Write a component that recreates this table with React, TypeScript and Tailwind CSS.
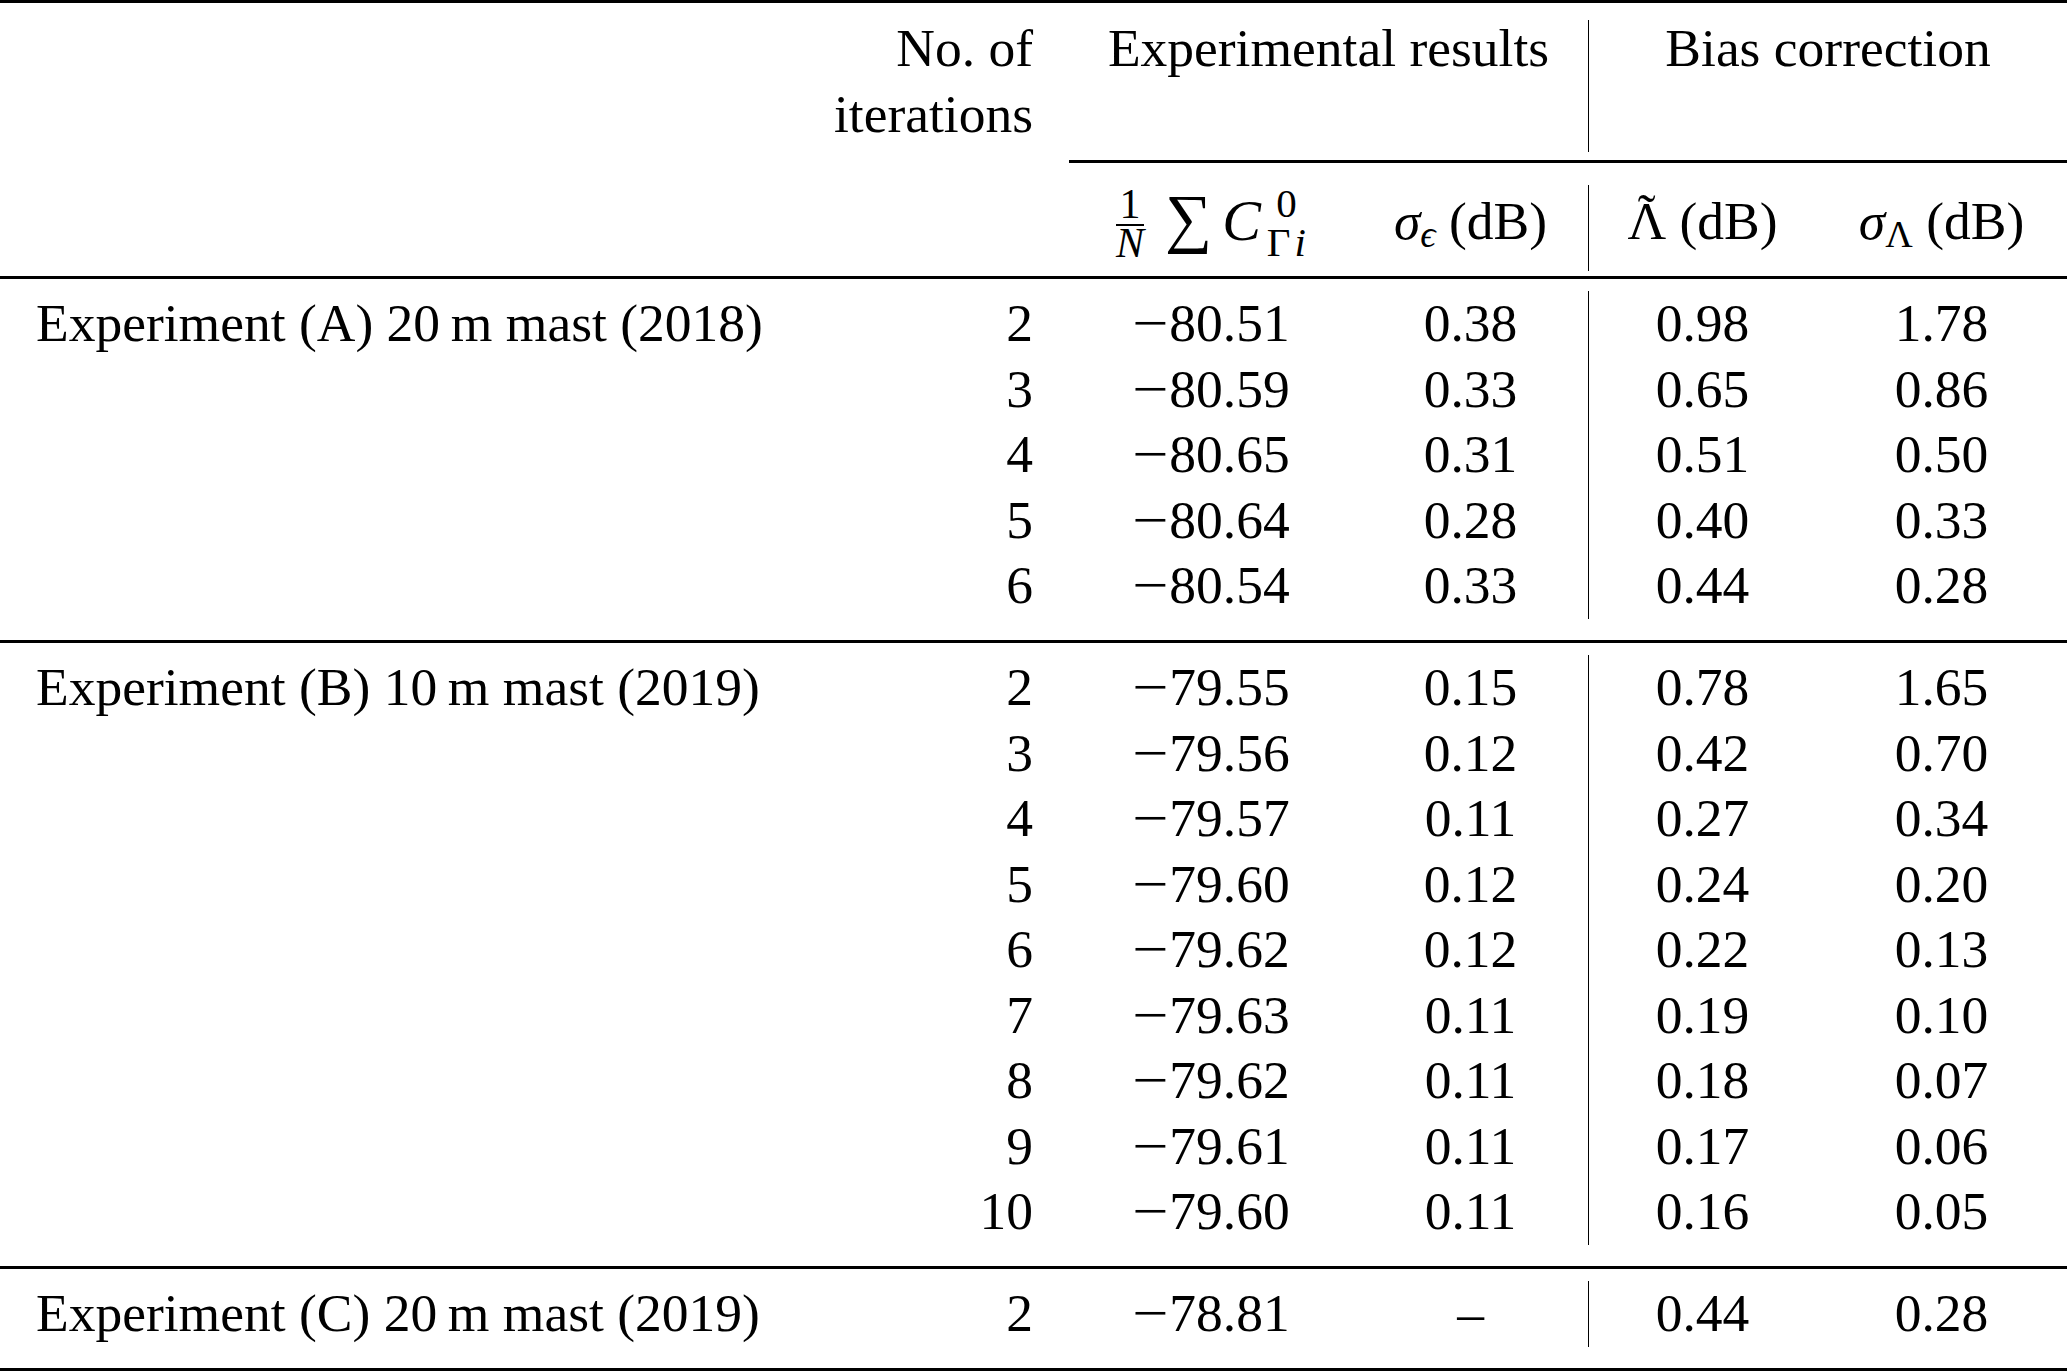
import React from "react"

// column grid shared by every row: label | iterations | mean | sigma_e | lambda | sigma_lambda
const GRID = "grid grid-cols-[798px_271px_284px_235px_228px_251px]"

type Row = [string, string, string, string, string]

const groups: { label: string; rows: Row[] }[] = [
  {
    label: "Experiment (A) 20\u2009m mast (2018)",
    rows: [
      ["2", "−80.51", "0.38", "0.98", "1.78"],
      ["3", "−80.59", "0.33", "0.65", "0.86"],
      ["4", "−80.65", "0.31", "0.51", "0.50"],
      ["5", "−80.64", "0.28", "0.40", "0.33"],
      ["6", "−80.54", "0.33", "0.44", "0.28"],
    ],
  },
  {
    label: "Experiment (B) 10\u2009m mast (2019)",
    rows: [
      ["2", "−79.55", "0.15", "0.78", "1.65"],
      ["3", "−79.56", "0.12", "0.42", "0.70"],
      ["4", "−79.57", "0.11", "0.27", "0.34"],
      ["5", "−79.60", "0.12", "0.24", "0.20"],
      ["6", "−79.62", "0.12", "0.22", "0.13"],
      ["7", "−79.63", "0.11", "0.19", "0.10"],
      ["8", "−79.62", "0.11", "0.18", "0.07"],
      ["9", "−79.61", "0.11", "0.17", "0.06"],
      ["10", "−79.60", "0.11", "0.16", "0.05"],
    ],
  },
  {
    label: "Experiment (C) 20\u2009m mast (2019)",
    rows: [["2", "−78.81", "–", "0.44", "0.28"]],
  },
]

function Rule() {
  return <div className="h-[3px] bg-black" />
}

function Num({ v }: { v: string }) {
  if (v.startsWith("−")) {
    return (
      <span>
        <span className="inline-block w-[37px] text-left">
          <span className="inline-block scale-x-[1.2] origin-left">−</span>
        </span>
        {v.slice(1)}
      </span>
    )
  }
  return <span>{v}</span>
}

function MeanHeader() {
  return (
    <span className="whitespace-nowrap">
      <span className="inline-flex flex-col items-stretch text-center text-[42px] leading-[26px] align-[22px] mr-[21px]">
        <span>1</span>
        <span className="mt-[7px] h-[1.5px] bg-black" />
        <span className="mt-[4.5px] italic">N</span>
      </span>
      <span className="text-[66px] leading-none">∑</span>
      <span className="italic ml-[10px] text-[58px] leading-none">C</span>
      <span className="inline-flex flex-col text-[41px] leading-[26px] align-[23px] ml-[6px]">
        <span>0</span>
        <span className="mt-[13px]">
          Γ<span className="italic ml-[4px]">i</span>
        </span>
      </span>
    </span>
  )
}

function SigmaHeader({ sub, italicSub }: { sub: string; italicSub?: boolean }) {
  return (
    <span className="whitespace-nowrap">
      <span className="italic">σ</span>
      <span className={`text-[38px] align-[-8px] ${italicSub ? "italic" : ""}`}>{sub}</span> (dB)
    </span>
  )
}

function LambdaHeader() {
  return (
    <span className="whitespace-nowrap">
      <span className="relative inline-block leading-none">
        Λ
        <span className="absolute left-0 right-0 -top-[8px] text-center">˜</span>
      </span>{" "}
      (dB)
    </span>
  )
}

function DataRow({ label, row }: { label?: string; row: Row }) {
  const [n, mean, se, lam, sl] = row
  return (
    <div className={`${GRID} h-[65.5px] leading-[65.5px]`}>
      <div className="pl-[36px] whitespace-nowrap">{label}</div>
      <div className="pr-[36px] text-right">{n}</div>
      <div className="text-center whitespace-nowrap">
        <Num v={mean} />
      </div>
      <div className="text-center">{se}</div>
      <div className="text-center border-l border-black">{lam}</div>
      <div className="text-center">{sl}</div>
    </div>
  )
}

export default function App() {
  return (
    <div className="w-[2067px] h-[1371px] overflow-hidden bg-white text-black font-['Liberation_Serif','Times_New_Roman',serif] text-[53.5px]">
      <Rule />

      {/* header, first line */}
      <div className={`${GRID} h-[157px] leading-[65.5px]`}>
        <div />
        <div className="pt-[13px] pr-[36px] text-right">
          <div>No. of</div>
          <div>iterations</div>
        </div>
        <div className="col-span-2 pt-[13px] text-center">Experimental results</div>
        <div className="col-span-2 mt-[17px] h-[132px] border-l border-black text-center">
          <div className="-mt-[4px]">Bias correction</div>
        </div>
      </div>

      {/* partial rule under the grouped headings */}
      <div className={GRID}>
        <div className="col-start-3 col-span-4 h-[3px] bg-black" />
      </div>

      {/* header, second line */}
      <div className={`${GRID} mt-[22px] mb-[18px] h-[73px] leading-[73px]`}>
        <div />
        <div />
        <div className="text-center">
          <MeanHeader />
        </div>
        <div className="text-center">
          <SigmaHeader sub="ϵ" italicSub />
        </div>
        <div className="text-center border-l border-black">
          <LambdaHeader />
        </div>
        <div className="text-center">
          <SigmaHeader sub="Λ" />
        </div>
      </div>

      {groups.map((g) => (
        <div key={g.label}>
          <Rule />
          <div className="pt-[12px] pb-[21.5px]">
            {g.rows.map((r, i) => (
              <DataRow key={i} label={i === 0 ? g.label : undefined} row={r} />
            ))}
          </div>
        </div>
      ))}
      <Rule />
    </div>
  )
}
